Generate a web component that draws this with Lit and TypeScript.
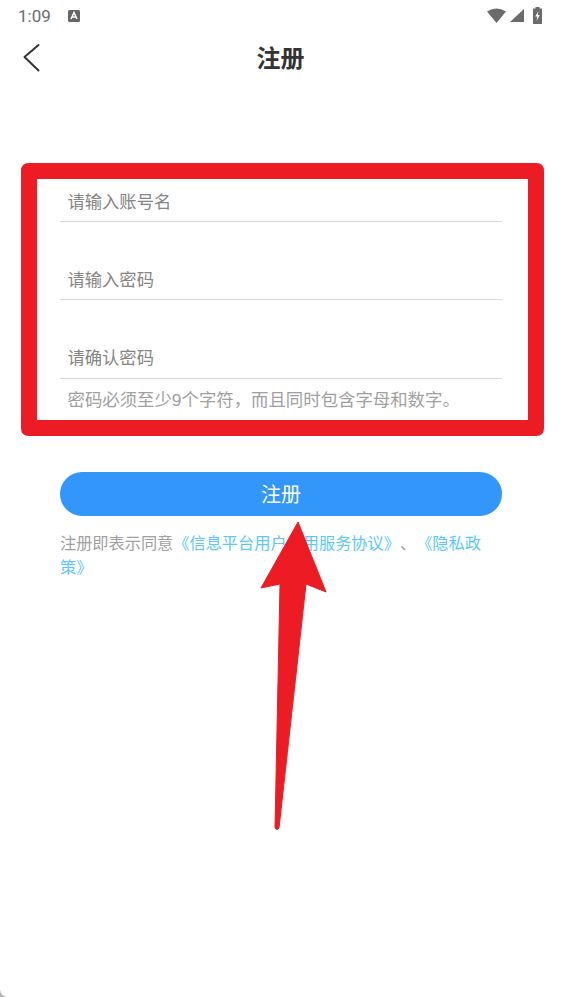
import { LitElement, html, css } from 'lit';
import { customElement } from 'lit/decorators.js';

const FIELDS = ['请输入账号名', '请输入密码', '请确认密码'];

@customElement('app-root')
export class AppRoot extends LitElement {
    static styles = css`
        :host {
            display: block;
            position: relative;
            width: 561px;
            height: 997px;
            overflow: hidden;
            background: #fff;
            font-family: "Liberation Sans", "Noto Sans CJK SC", sans-serif;
            text-spacing-trim: space-all;
        }

        .status {
            display: flex;
            align-items: center;
            height: 31px;
            padding: 0 19px 0 18px;
            color: #6b6b6b;
        }

        .time {
            font-family: Roboto, sans-serif;
            font-size: 17px;
            width: 50px;
        }

        .status-right {
            display: flex;
            align-items: center;
            gap: 4px;
            margin-left: auto;
        }

        .header {
            display: flex;
            align-items: center;
            justify-content: center;
            position: relative;
            box-sizing: border-box;
            height: 54px;
            padding-bottom: 4px;
            font-size: 24px;
            font-weight: 700;
            color: #333;
        }

        .back {
            position: absolute;
            left: 23px;
            top: 12px;
        }

        .form {
            padding: 94px 59px 0 60px;
        }

        .field {
            display: flex;
            align-items: center;
            height: 42px;
            margin-bottom: 36px;
            padding-left: 7.5px;
            border-bottom: 1px solid #d9d9d9;
            font-size: 17.3px;
            color: #858585;
        }

        .field:nth-child(1) {
            margin-bottom: 35px;
        }

        .field:nth-child(3) {
            margin-bottom: 0;
            height: 41px;
            padding-bottom: 1px;
        }

        .hint {
            padding: 12px 0 0 7.5px;
            height: 19px;
            font-size: 17.4px;
            line-height: 19px;
            white-space: nowrap;
            color: #a0a0a0;
        }

        .submit {
            display: flex;
            align-items: center;
            justify-content: center;
            box-sizing: border-box;
            height: 44px;
            margin-top: 62px;
            padding-bottom: 1px;
            border-radius: 22px;
            background: #3296fa;
            color: #fff;
            font-size: 20px;
        }

        .terms {
            margin-top: 15px;
            font-size: 16.2px;
            line-height: 24px;
            color: #a0a0a0;
        }

        .terms span {
            color: #5ac8fa;
        }

        .overlay {
            position: absolute;
            left: 0;
            top: 0;
            pointer-events: none;
        }
    `;

    protected render() {
        return html`
            <div class="status">
                <span class="time">1:09</span>
                <svg width="12" height="12" viewBox="0 0 12 12">
                    <rect width="12" height="12" rx="1.5" fill="#666"/>
                    <path d="M3 9 L6 2.5 L9 9 M4.2 7 H7.8" fill="none" stroke="#fff" stroke-width="1.5"/>
                </svg>
                <div class="status-right">
                    <svg width="19" height="15" viewBox="0 0 19 15">
                        <path d="M0 3.5 Q9.5 -2.5 19 3.5 L9.5 15 Z" fill="#6b6b6b"/>
                    </svg>
                    <svg width="14" height="13" viewBox="0 0 14 13">
                        <path d="M0 13 L14 0 V13 Z" fill="#6b6b6b"/>
                    </svg>
                    <svg width="9" height="17" viewBox="0 0 9 17" style="margin-left:5px">
                        <path d="M2.5 0 H6.5 V1.5 H9 V17 H0 V1.5 H2.5 Z" fill="#6b6b6b"/>
                        <path d="M5.5 4 L2.3 9.5 H4.3 L3.5 14 L6.7 8 H4.7 Z" fill="#fff"/>
                    </svg>
                </div>
            </div>
            <div class="header">
                <svg class="back" width="20" height="30" viewBox="0 0 20 30">
                    <path d="M15.5 2 L1.5 14 L15.5 27.5" fill="none" stroke="#333" stroke-width="2" stroke-linecap="round" stroke-linejoin="round"/>
                </svg>
                注册
            </div>
            <div class="form">
                <div>
                    ${FIELDS.map((f) => html`<div class="field">${f}</div>`)}
                </div>
                <div class="hint">密码必须至少9个字符，而且同时包含字母和数字。</div>
                <div class="submit">注册</div>
                <div class="terms">注册即表示同意<span>《信息平台用户使用服务协议》</span>、<span>《隐私政</span><br><span>策》</span></div>
            </div>
            <svg class="overlay" width="561" height="997" viewBox="0 0 561 997">
                <path fill-rule="evenodd" fill="#ed1c24" d="M29 163 H536 Q544 163 544 171 V428 Q544 436 536 436 H29 Q21 436 21 428 V171 Q21 163 29 163 Z M37 179 V420 H528 V179 Z"/>
                <path fill="#ed1c24" stroke="#ed1c24" stroke-width="1" stroke-linejoin="round" d="M298 522 L326 592 L306 584 L279 828 Q277 831 275 828 L280 584 L261 588 Z"/>
                <path fill="#b5b5b5" d="M0 990 Q1 996 7 997 H0 Z"/>
            </svg>
        `;
    }
}
